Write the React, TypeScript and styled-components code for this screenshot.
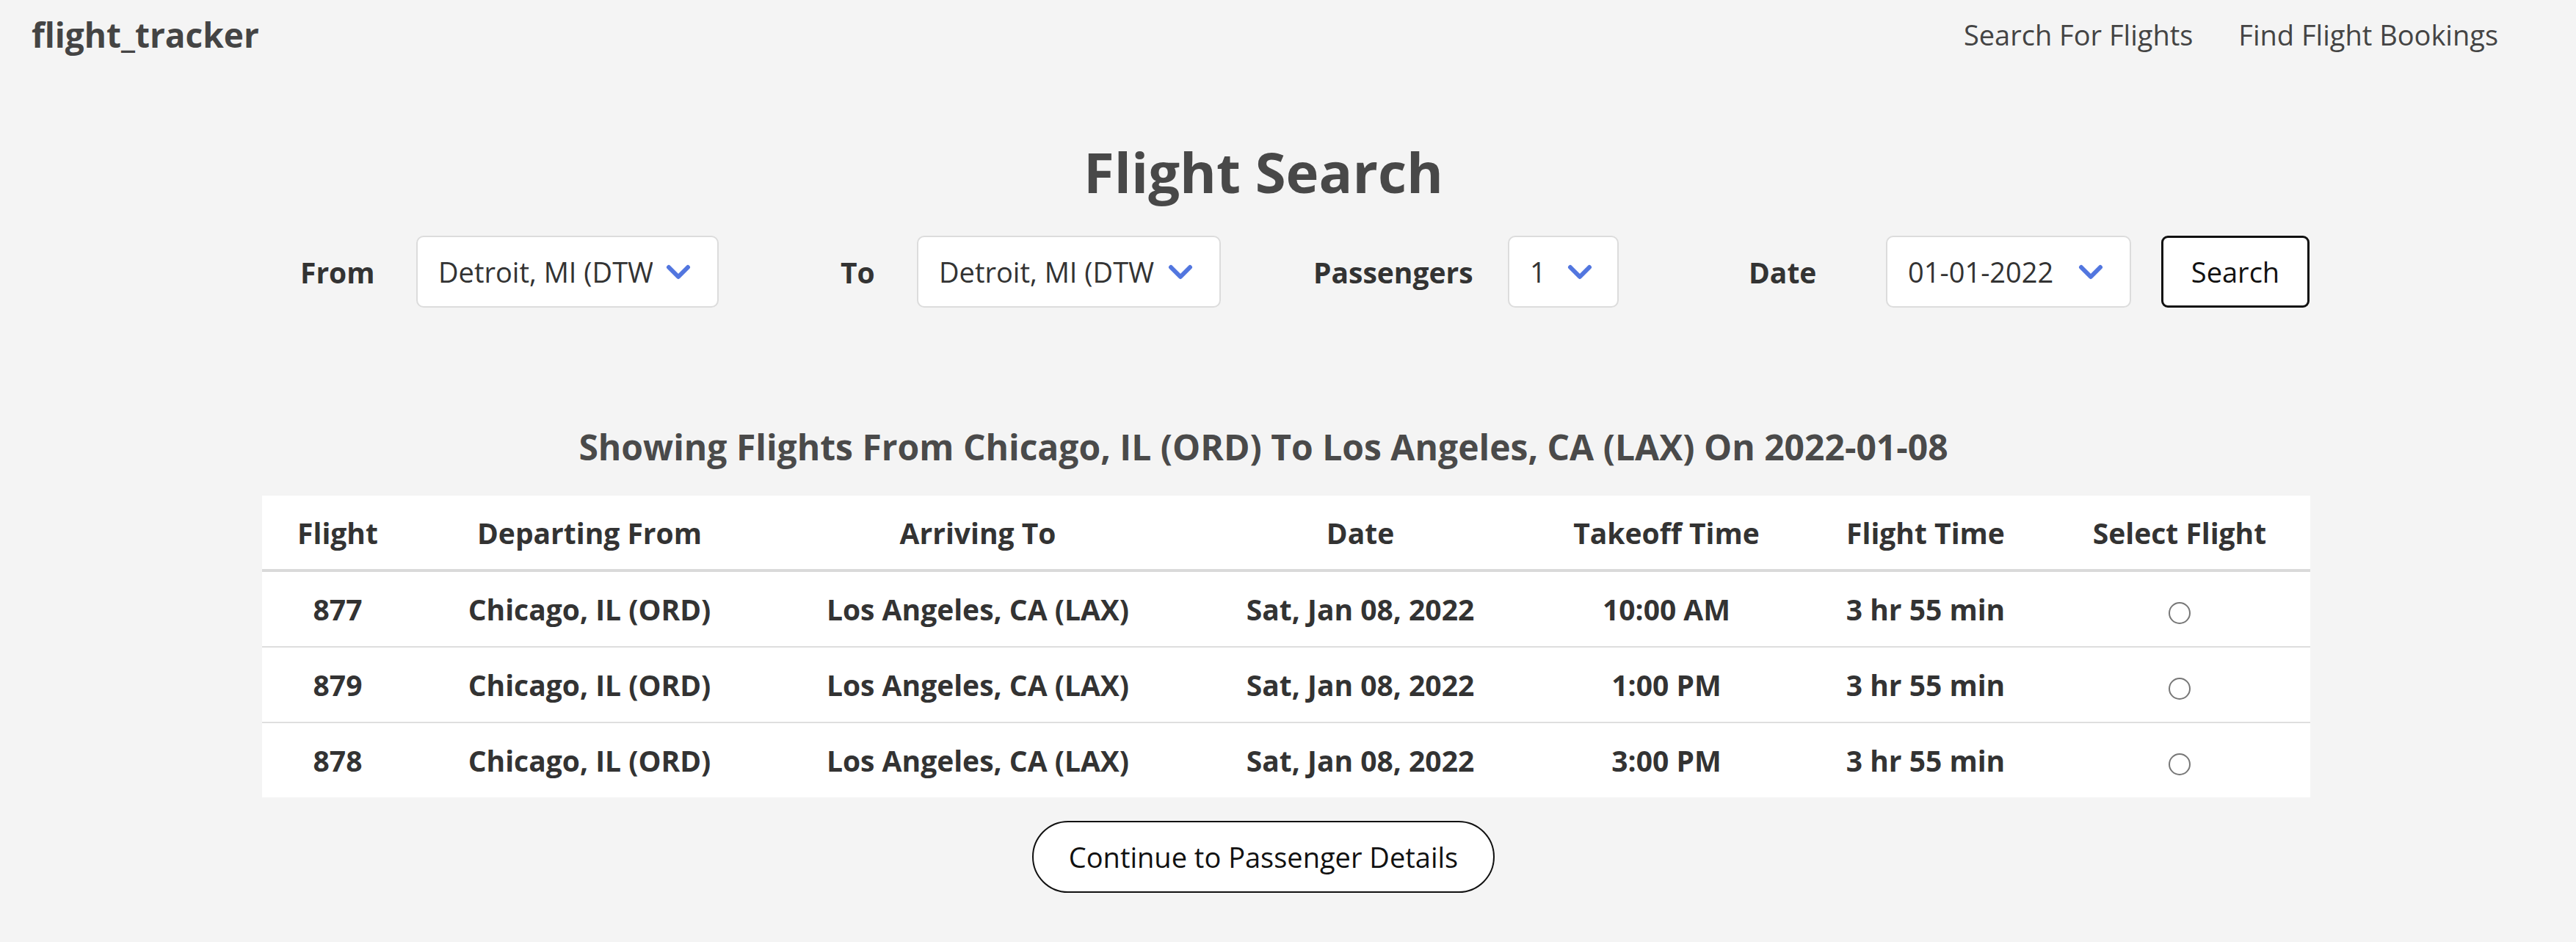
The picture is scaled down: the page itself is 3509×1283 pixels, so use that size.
import { FC } from 'react';
import styled, { createGlobalStyle } from 'styled-components';

const GlobalStyle = createGlobalStyle`
	html, body {
		margin: 0;
		padding: 0;
		background: #f4f4f4;
	}
	body {
		font-family: 'Open Sans', 'Noto Sans', sans-serif;
		color: #333;
	}
`;

const Page = styled.div`
	width: 3509px;
	min-height: 1283px;
`;

const Nav = styled.nav`
	display: flex;
	justify-content: space-between;
	align-items: flex-start;
	padding: 24px 106px 0 43px;
`;

const Logo = styled.div`
	font-size: 46px;
	line-height: 1;
	font-weight: 700;
	color: #444;
`;

const NavLinks = styled.div`
	display: flex;
	gap: 62px;
	padding-top: 4px;
`;

const NavLink = styled.a`
	font-size: 38px;
	line-height: 1;
	color: #444;
	text-decoration: none;
	cursor: pointer;
`;

const Main = styled.main`
	display: flex;
	flex-direction: column;
	align-items: center;
	width: 3442px;
`;

const Title = styled.h1`
	margin: 126px 0 0;
	font-size: 76px;
	line-height: 1;
	font-weight: 700;
	color: #484848;
`;

const SearchRow = styled.form`
	align-self: flex-start;
	margin: 49px 0 0 409px;
	display: flex;
	align-items: center;
`;

const Label = styled.label<{ $w: number }>`
	width: ${(p) => p.$w}px;
	font-size: 39px;
	font-weight: 700;
	color: #333;
`;

const SelectWrap = styled.div<{ $w: number; $after: number }>`
	position: relative;
	width: ${(p) => p.$w}px;
	margin-right: ${(p) => p.$after}px;
`;

const Select = styled.select<{ $pad: number }>`
	appearance: none;
	width: 100%;
	height: 98px;
	box-sizing: border-box;
	padding: 0 ${(p) => p.$pad}px 0 28px;
	border: 2px solid #dcdcdc;
	border-radius: 10px;
	background: #fff;
	font-family: 'Open Sans', sans-serif;
	font-size: 38px;
	color: #333;
	outline: none;
`;

const Chevron = styled.svg<{ $right: number }>`
	position: absolute;
	right: ${(p) => p.$right}px;
	top: 39px;
	width: 34px;
	height: 22px;
	pointer-events: none;
`;

const SearchButton = styled.button`
	width: 202px;
	height: 98px;
	border: 3px solid #111;
	border-radius: 9px;
	background: #fff;
	font-family: 'Open Sans', sans-serif;
	font-size: 38px;
	color: #111;
	cursor: pointer;
`;

const Subtitle = styled.h2`
	margin: 166px 0 0;
	font-size: 48px;
	line-height: 1;
	font-weight: 700;
	color: #4a4a4a;
`;

const Table = styled.table`
	align-self: flex-start;
	margin: 42px 0 0 357px;
	width: 2790px;
	table-layout: fixed;
	border-collapse: collapse;
	background: #fff;
`;

const Th = styled.th`
	height: 100px;
	padding: 0;
	font-size: 39px;
	font-weight: 700;
	color: #333;
	text-align: center;
	border-bottom: 4px solid #dadada;
`;

const Row = styled.tr`
	& + & td {
		border-top: 2px solid #dedede;
	}
`;

const Td = styled.td`
	height: 101px;
	padding: 0;
	font-size: 39px;
	font-weight: 700;
	color: #333;
	text-align: center;
`;

const Radio = styled.input`
	appearance: none;
	width: 30px;
	height: 30px;
	margin: 0;
	border: 2px solid #777;
	border-radius: 50%;
	background: #fff;
	vertical-align: middle;
	cursor: pointer;
	&:checked {
		box-shadow: inset 0 0 0 6px #fff;
		background: #333;
	}
`;

const ContinueButton = styled.button`
	margin-top: 32px;
	width: 630px;
	height: 98px;
	border: 2px solid #111;
	border-radius: 49px;
	background: #fff;
	font-family: 'Open Sans', sans-serif;
	font-size: 38px;
	color: #111;
	cursor: pointer;
`;

const ChevronIcon: FC<{ right: number }> = ({ right }) => (
	<Chevron $right={right} viewBox="0 0 34 22">
		<polyline points="4,4 17,17 30,4" fill="none" stroke="#5276df" strokeWidth="6" strokeLinecap="round" strokeLinejoin="round" />
	</Chevron>
);

const cols = [206, 480, 578, 464, 370, 336, 356];
const headers = ['Flight', 'Departing From', 'Arriving To', 'Date', 'Takeoff Time', 'Flight Time', 'Select Flight'];
const flights = [
	{ id: '877', time: '10:00 AM' },
	{ id: '879', time: '1:00 PM' },
	{ id: '878', time: '3:00 PM' },
];

const App: FC = () => {
	return (
		<Page>
			<GlobalStyle />
			<Nav>
				<Logo>flight_tracker</Logo>
				<NavLinks>
					<NavLink>Search For Flights</NavLink>
					<NavLink>Find Flight Bookings</NavLink>
				</NavLinks>
			</Nav>
			<Main>
				<Title>Flight Search</Title>
				<SearchRow onSubmit={(e) => e.preventDefault()}>
					<Label $w={158}>From</Label>
					<SelectWrap $w={412} $after={166}>
						<Select $pad={88} defaultValue="DTW">
							<option value="DTW">Detroit, MI (DTW)</option>
							<option value="ORD">Chicago, IL (ORD)</option>
							<option value="LAX">Los Angeles, CA (LAX)</option>
						</Select>
						<ChevronIcon right={38} />
					</SelectWrap>
					<Label $w={104}>To</Label>
					<SelectWrap $w={414} $after={126}>
						<Select $pad={88} defaultValue="DTW">
							<option value="DTW">Detroit, MI (DTW)</option>
							<option value="ORD">Chicago, IL (ORD)</option>
							<option value="LAX">Los Angeles, CA (LAX)</option>
						</Select>
						<ChevronIcon right={38} />
					</SelectWrap>
					<Label $w={265}>Passengers</Label>
					<SelectWrap $w={151} $after={177}>
						<Select $pad={70} defaultValue="1">
							<option>1</option>
							<option>2</option>
							<option>3</option>
						</Select>
						<ChevronIcon right={36} />
					</SelectWrap>
					<Label $w={187}>Date</Label>
					<SelectWrap $w={334} $after={41}>
						<Select $pad={80} defaultValue="01-01-2022">
							<option>01-01-2022</option>
							<option>01-08-2022</option>
						</Select>
						<ChevronIcon right={38} />
					</SelectWrap>
					<SearchButton type="submit">Search</SearchButton>
				</SearchRow>
				<Subtitle>Showing Flights From Chicago, IL (ORD) To Los Angeles, CA (LAX) On 2022-01-08</Subtitle>
				<Table>
					<colgroup>
						{cols.map((w, i) => (
							<col key={i} style={{ width: w }} />
						))}
					</colgroup>
					<thead>
						<tr>
							{headers.map((h) => (
								<Th key={h}>{h}</Th>
							))}
						</tr>
					</thead>
					<tbody>
						{flights.map((f) => (
							<Row key={f.id}>
								<Td>{f.id}</Td>
								<Td>Chicago, IL (ORD)</Td>
								<Td>Los Angeles, CA (LAX)</Td>
								<Td>Sat, Jan 08, 2022</Td>
								<Td>{f.time}</Td>
								<Td>3 hr 55 min</Td>
								<Td>
									<Radio type="radio" name="flight" value={f.id} />
								</Td>
							</Row>
						))}
					</tbody>
				</Table>
				<ContinueButton>Continue to Passenger Details</ContinueButton>
			</Main>
		</Page>
	);
};

export default App;
